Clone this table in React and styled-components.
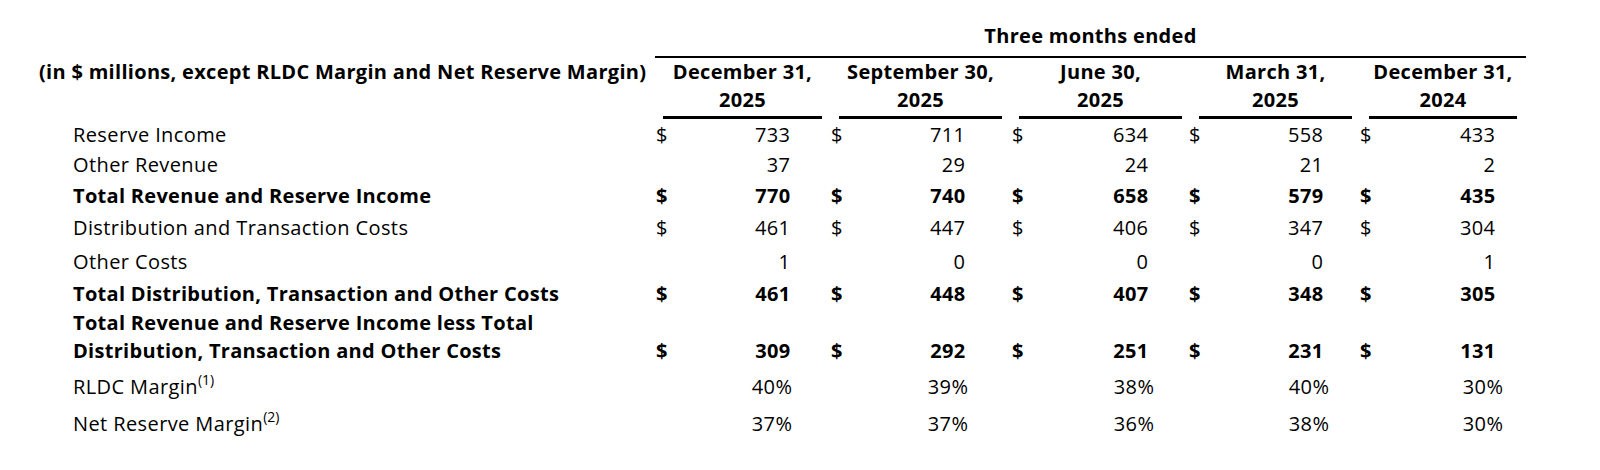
import React from "react"
import styled, { createGlobalStyle } from "styled-components"

const groups = [
  { w: 159, pad: 32, shift: -7, pct: 2, label: ["December 31,", "2025"] },
  { w: 163, pad: 37, shift: -8, pct: 3, label: ["September 30,", "2025"] },
  { w: 163, pad: 34, shift: -7, pct: 6, label: ["June 30,", "2025"] },
  { w: 153, pad: 29, shift: -10, pct: 6, label: ["March 31,", "2025"] },
  { w: 148, pad: 22, shift: -9, pct: 8, label: ["December 31,", "2024"] },
]

const rows = [
  { label: ["Reserve Income"], dollar: true, values: ["733", "711", "634", "558", "433"], top: 0 },
  { label: ["Other Revenue"], values: ["37", "29", "24", "21", "2"], top: 2 },
  { label: ["Total Revenue and Reserve Income"], bold: true, dollar: true, values: ["770", "740", "658", "579", "435"], top: 3 },
  { label: ["Distribution and Transaction Costs"], dollar: true, values: ["461", "447", "406", "347", "304"], top: 4 },
  { label: ["Other Costs"], values: ["1", "0", "0", "0", "1"], top: 6 },
  { label: ["Total Distribution, Transaction and Other Costs"], bold: true, dollar: true, values: ["461", "448", "407", "348", "305"], top: 4 },
  {
    label: ["Total Revenue and Reserve Income less Total", "Distribution, Transaction and Other Costs"],
    bold: true, dollar: true, values: ["309", "292", "251", "231", "131"], top: 1,
  },
  { label: ["RLDC Margin"], sup: "(1)", pct: true, values: ["40%", "39%", "38%", "40%", "30%"], top: 8 },
  { label: ["Net Reserve Margin"], sup: "(2)", pct: true, values: ["37%", "37%", "36%", "38%", "30%"], top: 9 },
]

// label column + period columns; column-gap also sits after the label column
const columns = `607px ${groups.map((g) => g.w + "px").join(" ")}`

const GlobalStyle = createGlobalStyle`
  body {
    margin: 0;
    background: #fff;
    color: #000;
    font-family: "Open Sans", "Liberation Sans", sans-serif;
  }
`

const Page = styled.div`
  width: 1600px;
  height: 470px;
  padding: 22px 0 0 39px;
  box-sizing: border-box;
  font-size: 20px;
  line-height: 28px;
  letter-spacing: 0.4px;
`

const Row = styled.div`
  display: grid;
  grid-template-columns: ${columns};
  column-gap: 17px;
  align-items: end;
  padding-top: ${(p) => p.$top || 0}px;
  font-weight: ${(p) => (p.$bold ? 700 : 400)};
  letter-spacing: ${(p) => (p.$bold ? 0.3 : 0.4)}px;
`

const Banner = styled.div`
  grid-column: 2 / -1;
  margin: 0 -9px 0 -8px;
  padding-bottom: 6px;
  border-bottom: 2px solid #000;
  text-align: center;
  font-weight: 700;
  letter-spacing: 0.3px;
`

const HeaderRow = styled(Row)`
  align-items: start;
  font-weight: 700;
  letter-spacing: 0.3px;
`

const Units = styled.div`
  white-space: nowrap;
`

const PeriodHead = styled.div`
  text-align: center;
  padding-bottom: 2px;
  border-bottom: 3px solid #000;
`

const Label = styled.div`
  padding-left: 34px;
  white-space: nowrap;
`

const Sup = styled.sup`
  font-size: 14px;
  line-height: 0;
  vertical-align: 9px;
  letter-spacing: 0;
`

const Cell = styled.div`
  display: flex;
  justify-content: space-between;
  padding-right: ${(p) => p.$pad}px;
`

const Dollar = styled.span`
  margin-left: ${(p) => p.$shift}px;
`

const Amount = styled.span`
  margin-left: auto;
  margin-right: -0.4px;
`

const Body = styled.div`
  padding-top: 2px;
`

export default function App() {
  return (
    <>
      <GlobalStyle />
      <Page>
        <Row>
          <Banner>Three months ended</Banner>
        </Row>
        <HeaderRow>
          <Units>(in $ millions, except RLDC Margin and Net Reserve Margin)</Units>
          {groups.map((g, i) => (
            <PeriodHead key={i}>
              {g.label[0]}
              <br />
              {g.label[1]}
            </PeriodHead>
          ))}
        </HeaderRow>
        <Body>
          {rows.map((r, ri) => (
            <Row key={ri} $top={r.top} $bold={r.bold}>
              <Label>
                {r.label.map((line, li) => (
                  <React.Fragment key={li}>
                    {li > 0 && <br />}
                    {line}
                  </React.Fragment>
                ))}
                {r.sup && <Sup>{r.sup}</Sup>}
              </Label>
              {groups.map((g, i) => (
                <Cell key={i} $pad={r.pct ? g.pad - g.pct : g.pad}>
                  {r.dollar && <Dollar $shift={g.shift}>$</Dollar>}
                  <Amount>{r.values[i]}</Amount>
                </Cell>
              ))}
            </Row>
          ))}
        </Body>
      </Page>
    </>
  )
}
